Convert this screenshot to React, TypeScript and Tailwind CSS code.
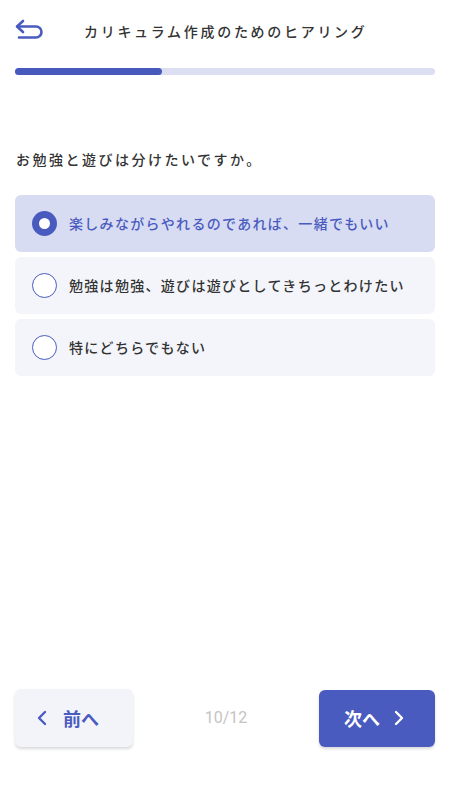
import { useState } from "react";

const options = [
  "楽しみながらやれるのであれば、一緒でもいい",
  "勉強は勉強、遊びは遊びとしてきちっとわけたい",
  "特にどちらでもない",
];

const font = { fontFamily: '"Noto Sans CJK JP", "Noto Sans", sans-serif' };

export default function App() {
  const [selected, setSelected] = useState(0);

  return (
    <main className="flex h-[800px] w-[450px] flex-col bg-white text-[#333]" style={font}>
      <header className="flex items-center px-[15px] pt-[19px]">
        <button className="h-[24px] w-[30px] text-[#4a5bbf]">
          <svg viewBox="0 0 30 24" width="30" height="24" fill="none" stroke="currentColor" strokeWidth="2.6" strokeLinecap="round" strokeLinejoin="round">
            <path d="M8 2 2 7.5 8 13" />
            <path d="M2.5 7.5H21a5.5 5.5 0 0 1 0 11H4" />
          </svg>
        </button>
        <h1 className="ml-[39px] text-[14px] font-medium tracking-[2.7px] text-[#333]">
          カリキュラム作成のためのヒアリング
        </h1>
      </header>

      <div className="mx-[15px] mt-[25px] h-[7px] rounded-full bg-[#dcdff1]">
        <div className="h-full w-[35%] rounded-full bg-[#4759bd]" />
      </div>

      <p className="mx-[16px] mt-[74px] text-[14px] font-medium tracking-[2.5px] text-[#333]">
        お勉強と遊びは分けたいですか。
      </p>

      <div className="mx-[15px] mt-[25px] flex flex-col gap-[5px]">
        {options.map((o, i) => {
          const on = selected === i;
          return (
            <button
              key={o}
              onClick={() => setSelected(i)}
              className={`flex h-[57px] items-center gap-[12px] rounded-[6px] px-[17px] text-left ${
                on ? "bg-[#d8dcf2]" : "bg-[#f4f5fa]"
              }`}
            >
              <span
                className={`h-[25px] w-[25px] shrink-0 rounded-full bg-white ${
                  on ? "border-[7px] border-[#4a5bbf]" : "border-[1.5px] border-[#4a5bbf]"
                }`}
              />
              <span
                className={`text-[14px] font-medium tracking-[1.3px] ${on ? "text-[#4a5bbf]" : "text-[#333]"}`}
              >
                {o}
              </span>
            </button>
          );
        })}
      </div>

      <footer className="mt-auto mb-[53px] flex items-center justify-between px-[15px]">
        <button className="flex h-[58px] w-[118px] items-center gap-[16px] rounded-[6px] bg-[#f3f4fa] pl-[22px] text-[18px] font-bold text-[#4a5bbf] shadow-[0_2px_3px_rgba(0,0,0,0.15)]">
          <svg viewBox="0 0 10 16" width="10" height="16" fill="none" stroke="currentColor" strokeWidth="2.4" strokeLinecap="round" strokeLinejoin="round">
            <path d="M8 2 2 8l6 6" />
          </svg>
          <span>前へ</span>
        </button>
        <span className="text-[16px] text-[#c4c4c4]" style={{ fontFamily: "Roboto, sans-serif" }}>
          10/12
        </span>
        <button className="flex h-[57px] w-[116px] items-center gap-[14px] rounded-[6px] bg-[#4a5bbf] pl-[25px] text-[18px] font-bold text-white shadow-[0_2px_3px_rgba(0,0,0,0.15)]">
          <span>次へ</span>
          <svg viewBox="0 0 10 16" width="10" height="16" fill="none" stroke="currentColor" strokeWidth="2.4" strokeLinecap="round" strokeLinejoin="round">
            <path d="M2 2l6 6-6 6" />
          </svg>
        </button>
      </footer>
    </main>
  );
}
